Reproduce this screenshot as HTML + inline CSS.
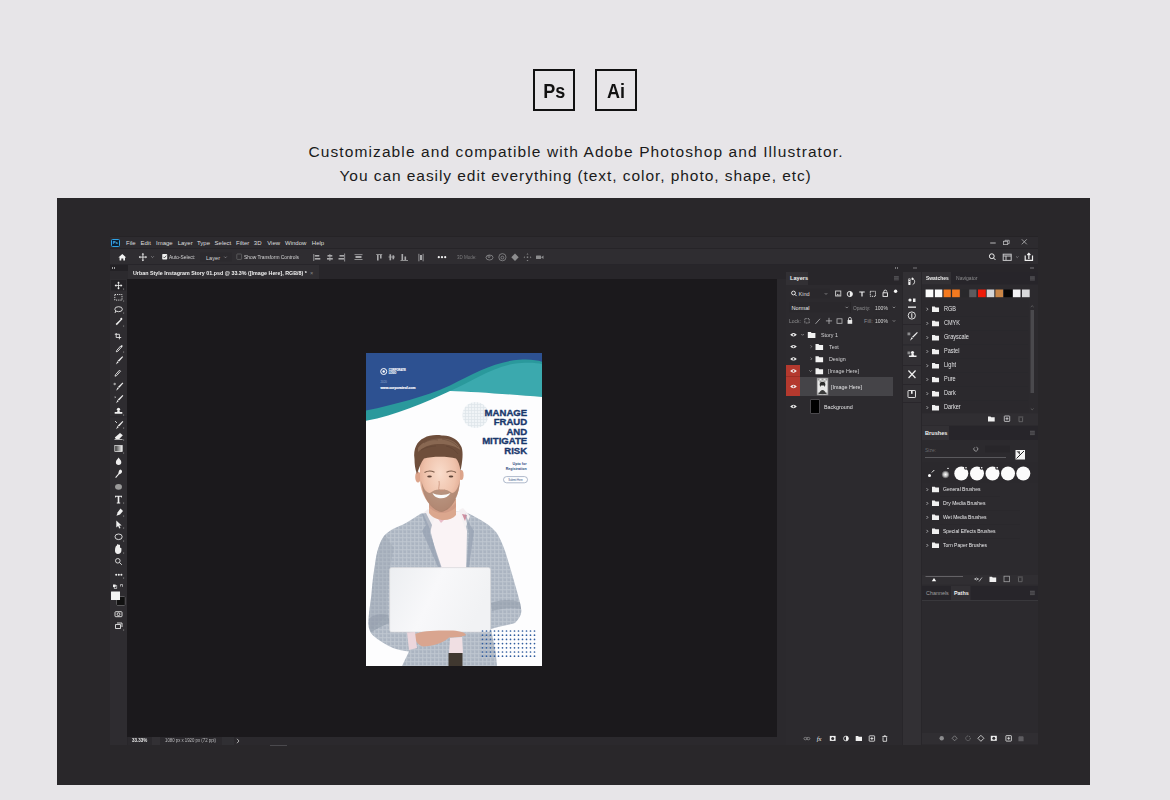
<!DOCTYPE html>
<html><head><meta charset="utf-8">
<style>
*{margin:0;padding:0;box-sizing:border-box}
html,body{width:1170px;height:800px;overflow:hidden;background:#e7e5e8;font-family:"Liberation Sans",sans-serif}
.a{position:absolute}
.box{position:absolute;border:2.6px solid #111;width:42px;height:42px;font-weight:bold;font-size:20px;color:#111;text-align:center;line-height:40px}
.cap{position:absolute;white-space:nowrap;font-size:15.5px;color:#1a1a1a}
.t{position:absolute;white-space:nowrap;font-size:6px;line-height:8px;color:#dedede}
.ic{position:absolute;overflow:visible}
.t{transform-origin:0 50%}
</style></head><body>
<div class="box" style="left:533px;top:69px"><span style="display:inline-block;transform:scaleX(0.9)">Ps</span></div>
<div class="box" style="left:595px;top:69px"><span style="display:inline-block;transform:scaleX(0.9)">Ai</span></div>
<div class="cap" style="left:308.5px;top:143px;letter-spacing:1.1px">Customizable and compatible with Adobe Photoshop and Illustrator.</div>
<div class="cap" style="left:339.5px;top:167px;letter-spacing:0.94px">You can easily edit everything (text, color, photo, shape, etc)</div>

<!-- dark frame -->
<div class="a" style="left:57px;top:198px;width:1033px;height:587px;background:#29272a"></div>

<!-- PS window base -->
<div class="a" id="menubar" style="left:110px;top:236px;width:928px;height:12px;background:#2d2b2f;border-top:1px solid #252326"></div>
<div class="a" id="optbar" style="left:110px;top:248px;width:928px;height:17px;background:#2f2d31;border-top:1px solid #262428;border-bottom:1px solid #27252a"></div>
<div class="a" style="left:110px;top:265px;width:928px;height:480px;background:#28262a"></div>

<!-- menu -->
<div class="a" style="left:111px;top:239px;width:9px;height:8px;border:1.3px solid #2fa3e6;border-radius:1.5px;background:#0b1f33"></div>
<div class="t" style="left:113px;top:239px;font-size:4px;color:#5cc1ff;font-weight:bold;line-height:8px">Ps</div>
<div class="t" style="left:126px;top:238.5px">File</div>
<div class="t" style="left:140.5px;top:238.5px">Edit</div>
<div class="t" style="left:156px;top:238.5px">Image</div>
<div class="t" style="left:177.7px;top:238.5px">Layer</div>
<div class="t" style="left:197px;top:238.5px">Type</div>
<div class="t" style="left:214.6px;top:238.5px">Select</div>
<div class="t" style="left:236px;top:238.5px">Filter</div>
<div class="t" style="left:253.8px;top:238.5px">3D</div>
<div class="t" style="left:267.2px;top:238.5px">View</div>
<div class="t" style="left:285px;top:238.5px">Window</div>
<div class="t" style="left:311.8px;top:238.5px">Help</div>

<!-- options bar -->
<svg class="ic" style="left:110px;top:248px" width="460" height="17" viewBox="110 248 460 17">
 <g fill="#f2f2f2">
  <path d="M118.4 257.6 L122.3 254 L126.2 257.6 L125 257.6 L125 260.6 L123.3 260.6 L123.3 258.6 L121.3 258.6 L121.3 260.6 L119.6 260.6 L119.6 257.6Z"/>
 </g>
 <g stroke="#e6e6e6" stroke-width="0.9" fill="none">
  <path d="M142.9 253.6 V260.6 M139.4 257.1 H146.4"/>
 </g>
 <g fill="#e6e6e6"><path d="M142.9 253 l-1.3 1.5 h2.6z M142.9 261.2 l-1.3 -1.5 h2.6z M138.8 257.1 l1.5 -1.3 v2.6z M147 257.1 l-1.5 -1.3 v2.6z"/></g>
 <path d="M151.2 256.3 l1.3 1.3 l1.3 -1.3" stroke="#9a9a9c" stroke-width="0.7" fill="none"/>
 <rect x="162.2" y="253.9" width="5" height="5.6" rx="0.8" fill="#f0f0f0"/>
 <path d="M163.3 256.8 l1.1 1.1 l1.9 -2.2" stroke="#333" stroke-width="0.8" fill="none"/>
 <rect x="200" y="252.5" width="32" height="9" fill="#2c2a2e"/>
 <path d="M224.3 256.6 l1.2 1.2 l1.2 -1.2" stroke="#9a9a9c" stroke-width="0.7" fill="none"/>
 <rect x="236.8" y="254" width="4.8" height="5.4" rx="0.6" fill="none" stroke="#6b6b6d" stroke-width="0.7"/>
 <g fill="#a9a9ab">
  <rect x="313.4" y="254" width="0.8" height="7"/><rect x="314.8" y="255" width="4.5" height="1.6"/><rect x="314.8" y="258" width="5.5" height="1.6"/>
  <rect x="329.5" y="254" width="0.8" height="7"/><rect x="327.5" y="255" width="4.8" height="1.6"/><rect x="327" y="258" width="5.8" height="1.6"/>
  <rect x="344.3" y="253.5" width="0.8" height="8"/><rect x="339.5" y="255" width="4.5" height="1.6"/><rect x="338.5" y="258" width="5.5" height="1.6"/>
  <rect x="354.5" y="254.3" width="8" height="0.8"/><rect x="355.5" y="256" width="6" height="2"/><rect x="354.5" y="259.2" width="8" height="0.8"/>
  <rect x="376.2" y="254" width="6" height="0.8"/><rect x="377" y="255" width="1.6" height="5.5"/><rect x="380" y="255" width="1.6" height="3.5"/>
  <rect x="388.5" y="256.6" width="6.5" height="0.8"/><rect x="389.5" y="254.3" width="1.6" height="6"/><rect x="392.5" y="255.3" width="1.6" height="4"/>
  <rect x="400.5" y="260" width="7.5" height="0.8"/><rect x="401.5" y="254" width="1.6" height="6"/><rect x="404.5" y="256.5" width="1.6" height="3.5"/>
  <rect x="418.5" y="253.8" width="0.8" height="7.5"/><rect x="422.7" y="253.8" width="0.8" height="7.5"/><rect x="420" y="255" width="2" height="5"/>
 </g>
 <g fill="#f4f4f4"><circle cx="438.8" cy="257.2" r="1.1"/><circle cx="442" cy="257.2" r="1.1"/><circle cx="445.2" cy="257.2" r="1.1"/></g>
 <g fill="none" stroke="#8c8c8e" stroke-width="0.8">
  <ellipse cx="489.5" cy="257.5" rx="3.5" ry="2.5"/><circle cx="489" cy="256.5" r="1"/>
  <circle cx="502.4" cy="257.2" r="3.6"/><circle cx="502.4" cy="257.6" r="1.4"/>
 </g>
 <g fill="#8c8c8e">
  <path d="M515 253.5 l3.7 3.7 l-3.7 3.7 l-3.7 -3.7z"/>
  <path d="M527.5 253.3 l1 1.2 h-2z M527.5 261.2 l1 -1.2 h-2z M523.6 257.2 l1.2 -1 v2z M531.4 257.2 l-1.2 -1 v2z"/><rect x="526.8" y="256.5" width="1.4" height="1.4"/>
  <rect x="536" y="255.5" width="5" height="3.5" rx="0.5"/><path d="M541 257.2 l2.5 -1.8 v3.6z"/>
 </g>
</svg>
<div class="t" style="left:169px;top:253px;font-size:5.8px;color:#d4d4d5;transform:scaleX(0.83)">Auto-Select:</div>
<div class="t" style="left:206px;top:253.5px;font-size:5.6px;color:#d4d4d5">Layer</div>
<div class="t" style="left:243.5px;top:253px;font-size:5.8px;color:#d4d4d5;transform:scaleX(0.84)">Show Transform Controls</div>
<div class="t" style="left:457px;top:253px;font-size:5.8px;color:#7a7a7c;transform:scaleX(0.78)">3D Mode:</div>

<!-- top right -->
<svg class="ic" style="left:980px;top:236px" width="58" height="28" viewBox="980 236 58 28">
 <rect x="990.2" y="242.5" width="5.5" height="1" fill="#b8b8ba"/>
 <g fill="none" stroke="#b8b8ba" stroke-width="0.8">
  <rect x="1003.5" y="241.3" width="4.2" height="3.3"/><path d="M1005 241.3 v-1 h4.2 v3.3 h-1.5"/>
  <path d="M1021.8 239.3 l5 5 M1026.8 239.3 l-5 5"/>
 </g>
 <g fill="none" stroke="#f0f0f0" stroke-width="1">
  <circle cx="991.8" cy="256.2" r="2.4"/><path d="M993.5 258 l2 2"/>
  <rect x="1003.2" y="254.2" width="8" height="6.2" stroke="#c8c8ca"/><path d="M1003.2 256 h8 M1006 256 v4.4" stroke="#c8c8ca"/>
  <path d="M1016.2 256.5 l1.1 1.1 l1.1 -1.1" stroke="#9a9a9c" stroke-width="0.7"/>
  <path d="M1025.2 255.5 v4.8 h7.3 v-4.8 M1028.85 259 v-5.5 M1027.3 255 l1.55 -1.6 l1.55 1.6" stroke-width="1.2"/>
 </g>
</svg>
<!-- tab row -->
<div class="a" style="left:128px;top:265px;width:191px;height:14px;background:#302e32"></div>
<div class="t" style="left:133.4px;top:268.5px;font-size:5.6px;font-weight:bold;color:#f0f0f0;transform:scaleX(0.955)">Urban Style Instagram Story 01.psd @ 33.3% ([Image Here], RGB/8) *</div>
<div class="t" style="left:310px;top:268.5px;font-size:5.6px;color:#8a8a8c">&#215;</div>
<div class="a" style="left:110px;top:265px;width:18px;height:5.5px;background:#232125"></div>
<div class="a" style="left:110px;top:270.5px;width:18px;height:8.5px;background:#2c2a2e"></div>
<div class="a" style="left:112px;top:267px;width:1.2px;height:2px;background:#a0a0a2"></div>
<div class="a" style="left:114px;top:267px;width:1.2px;height:2px;background:#a0a0a2"></div>
<!-- toolbar -->
<div class="a" style="left:110px;top:279px;width:17px;height:466px;background:#2e2c30"></div>
<!-- canvas -->
<div class="a" style="left:127px;top:279px;width:650px;height:458px;background:#1b191c"></div>

<!-- toolbar icons -->
<svg class="ic" style="left:106px;top:276px" width="25" height="360" viewBox="106 276 25 360">
 <rect x="111" y="280" width="15" height="10.5" fill="#242226"/>
 <rect x="110" y="416.5" width="17" height="0.6" fill="#27252a"/>
 <g fill="#f0f0f0" stroke="none">
  <!-- move -->
  <rect x="118.1" y="282.3" width="0.8" height="6.4"/><rect x="115.3" y="285.1" width="6.4" height="0.8"/>
  <path d="M118.5 281.6 l1.4 1.7 h-2.8z M118.5 289.4 l1.4 -1.7 h-2.8z M114.6 285.5 l1.7 -1.4 v2.8z M122.4 285.5 l-1.7 -1.4 v2.8z"/>
 </g>
 <g fill="none" stroke="#e8e8e8" stroke-width="0.9">
  <rect x="114.8" y="294.5" width="7.2" height="5.6" stroke-dasharray="1.2 1"/>
  <ellipse cx="118.6" cy="309.2" rx="3.8" ry="2.5"/>
  <path d="M115.8 311 l-0.8 2"/>
  <path d="M116.2 333 v4.5 h5 M114.8 334.3 h4.6 v5"/>
  
  <path d="M120.8 345.8 l-4 4.5 l-0.5 1.5 l1.5 -0.5 l4 -4.5"/>
  <path d="M119.5 370.2 l-4 4.5 l-0.5 1.5 l1.5 -0.5 l4 -4.5z"/>
  <ellipse cx="118.6" cy="536.8" rx="3.6" ry="2.8"/>
  <circle cx="117.8" cy="560.8" r="2.3"/><path d="M119.5 562.5 l2.3 2.3"/>
  <rect x="115" y="611.7" width="7" height="5" rx="0.8"/><circle cx="118.5" cy="614.2" r="1.4"/>
  <path d="M115.5 624.5 h5 v4 h-5z M117 623 h5 v4"/>
  <rect x="116.8" y="597" width="8" height="8" rx="0.6" stroke="#9a9a9a" stroke-width="0.8"/>
 </g>
 <g fill="#f0f0f0">
  <path d="M121.5 318.5 l0.8 0.8 l-5.5 6 l-1.2 -1.2z"/><circle cx="121.3" cy="318.8" r="1"/>
  <path d="M121.8 345 l1 1 l-1.5 1.5 l-1 -1z"/>
  <path d="M122.3 356.3 l0.8 0.8 l-4 4.5 l-1.6 -0.6z"/><path d="M117.3 361.3 l1.4 0.9 l-2.8 2.4z"/>
  <path d="M122.5 382.5 l0.8 0.8 l-4 4.5 l-1.6 -0.6z"/><path d="M117.5 387.5 l1.4 0.9 l-2.8 2.4z"/><circle cx="114.7" cy="384" r="1.2" fill="#a0a0a0"/>
  <path d="M122.5 395 l0.8 0.8 l-4 4.5 l-1.6 -0.6z"/><path d="M117.5 400 l1.4 0.9 l-2.8 2.4z"/><path d="M114.8 396 l1 1.3 l-1 1z"/>
  <circle cx="118.5" cy="409.3" r="1.6"/><path d="M117.6 410.5 h1.8 l0.5 1.6 h2.4 v1.6 h-7.6 v-1.6 h2.4z"/>
  <path d="M122.5 421 l0.8 0.8 l-4 4.5 l-1.6 -0.6z"/><path d="M117.5 426 l1.4 0.9 l-2.8 2.4z"/><path d="M115 421 l2 2" stroke="#f0f0f0" stroke-width="0.8"/>
  <path d="M120 433 l2.8 2.2 l-3.5 3.8 h-3.5 l-1 -1.5z"/><rect x="114.5" y="439.2" width="8" height="0.7"/>
  <path d="M118.6 457.6 c1.5 2 2.7 3.3 2.7 4.6 a2.7 2.7 0 0 1 -5.4 0 c0 -1.3 1.2 -2.6 2.7 -4.6z"/>
  <path d="M120.5 469.5 c2 0.8 2 3 0.5 4 l-2 1 l-3 3.5 l-0.8 -0.8 l3 -3.5 l0.5 -2 c0.5 -1.5 1 -2.2 1.8 -2.2z"/>
  <ellipse cx="118.5" cy="486.8" rx="3.5" ry="2.9" fill="#9a9a9a"/>
  <path d="M115 495.8 h7 v1.6 h-0.8 v-0.6 h-1.9 v5.6 h0.9 v1 h-3.4 v-1 h0.9 v-5.6 h-1.9 v0.6 h-0.8z"/>
  <path d="M120.5 508.5 l2.5 2.5 l-3 3.6 l-3.5 1.2 l1.2 -3.5z"/>
  <path d="M116.3 520.5 v7 l1.8 -1.5 l1.2 2.5 l1.2 -0.6 l-1.2 -2.4 h2.4z"/>
  <path d="M115 550 c0 -2.5 1 -4.5 2 -4.5 v3 v-4 c0.6 -0.5 1.2 -0.5 1.5 0 v3.5 v-3 c0.5 -0.5 1.2 -0.5 1.5 0 v3 c0.5 -0.5 1.4 -0.3 1.4 0.5 v2 c0 2 -1.5 3.5 -3.5 3.5 c-1.8 0 -2.9 -1.5 -2.9 -3z"/>
  <circle cx="116.2" cy="574.8" r="1"/><circle cx="118.8" cy="574.8" r="1"/><circle cx="121.4" cy="574.8" r="1"/>
  <rect x="111.1" y="591.7" width="8.9" height="8.3" />
  <rect x="113" y="584.5" width="2.6" height="2.6"/><rect x="114.2" y="585.7" width="2.6" height="2.6" fill="none" stroke="#f0f0f0" stroke-width="0.6"/>
  <path d="M120.5 584.5 h2 v2 M122.5 586.5 l-0.6 -0.6 M120.5 584.5 v2" stroke="#f0f0f0" stroke-width="0.6" fill="none"/>
 </g>
 <rect x="116.8" y="597" width="8" height="8" fill="#111"/>
 <rect x="111.1" y="591.7" width="8.9" height="8.3" fill="#f4f4f4"/>
 <g fill="#aaa">
  <rect x="123.2" y="288.6" width="0.9" height="0.9"/><rect x="123.2" y="300.6" width="0.9" height="0.9"/><rect x="123.2" y="312.6" width="0.9" height="0.9"/>
  <rect x="123.2" y="325.6" width="0.9" height="0.9"/><rect x="123.2" y="351.6" width="0.9" height="0.9"/><rect x="123.2" y="414.6" width="0.9" height="0.9"/>
  <rect x="123.2" y="427.6" width="0.9" height="0.9"/><rect x="123.2" y="439.6" width="0.9" height="0.9"/><rect x="123.2" y="452.6" width="0.9" height="0.9"/>
  <rect x="123.2" y="502.6" width="0.9" height="0.9"/><rect x="123.2" y="515.6" width="0.9" height="0.9"/><rect x="123.2" y="527.6" width="0.9" height="0.9"/>
  <rect x="123.2" y="540.6" width="0.9" height="0.9"/><rect x="123.2" y="552.6" width="0.9" height="0.9"/><rect x="123.2" y="577.6" width="0.9" height="0.9"/>
  <rect x="123.2" y="629.6" width="0.9" height="0.9"/>
 </g>
 <linearGradient id="gr1" x1="0" x2="1"><stop offset="0" stop-color="#333"/><stop offset="1" stop-color="#eee"/></linearGradient>
 <rect x="114.8" y="445.6" width="7.4" height="6" fill="url(#gr1)" stroke="#eee" stroke-width="0.7"/>
</svg>
<!-- status bar -->
<div class="a" style="left:128px;top:737px;width:649px;height:8px;background:#2b292d"></div>
<div class="a" style="left:152px;top:737px;width:8px;height:7.5px;background:#323034"></div>
<div class="a" style="left:222px;top:737px;width:12px;height:7.5px;background:#302f33"></div>
<div class="t" style="left:131.5px;top:737px;font-size:5px;line-height:7.5px;font-weight:bold;color:#e8e8e8;transform:scaleX(0.9)">33.33%</div>
<div class="t" style="left:165px;top:737px;font-size:5px;line-height:7.5px;color:#bdbdbf;transform:scaleX(0.86)">1080 px x 1920 px (72 ppi)</div>
<svg class="ic" style="left:236px;top:738px" width="4" height="6" viewBox="0 0 4 6"><path d="M1 0.8 l2 2.2 l-2 2.2" stroke="#d0d0d0" stroke-width="0.8" fill="none"/></svg>
<div class="a" style="left:270px;top:745px;width:17px;height:1px;background:#4a494d"></div>
<!-- gutter -->
<div class="a" style="left:784px;top:279px;width:2px;height:466px;background:#28262a"></div>
<div class="a" style="left:777px;top:279px;width:9px;height:466px;background:#2b292d"></div>

<!-- layers panel -->
<div class="a" style="left:786px;top:272px;width:116px;height:473px;background:#2c2a2e"></div>
<div class="a" style="left:808px;top:272px;width:94px;height:13px;background:#28262a"></div>

<!-- layers panel content -->
<div class="a" style="left:786px;top:272px;width:22px;height:13px;background:#323034"></div>
<div class="t" style="left:790px;top:274px;font-size:5.6px;font-weight:bold;color:#f0f0f0">Layers</div>
<svg class="ic" style="left:786px;top:272px" width="116" height="473" viewBox="786 272 116 473">
 <g><rect x="894" y="276" width="4.8" height="4.4" fill="#4e4d51"/><rect x="894" y="277.5" width="4.8" height="0.5" fill="#3a393d"/><rect x="894" y="278.9" width="4.8" height="0.5" fill="#3a393d"/></g>
 <rect x="797" y="288.5" width="33" height="10" fill="#2a282c"/>
 <rect x="789" y="302" width="62" height="10.5" fill="#2a282c"/>
 <rect x="873" y="302.5" width="16" height="9.5" fill="#2b292d"/>
 <rect x="873" y="316" width="16" height="9.5" fill="#2b292d"/>
 <rect x="850.3" y="302" width="0.6" height="11" fill="#242226"/>
 <g fill="none" stroke="#f0f0f0" stroke-width="0.9">
  <circle cx="793.5" cy="293" r="1.9"/><path d="M794.8 294.3 l1.8 1.8"/>
  <rect x="835.6" y="291" width="5.2" height="5" stroke="#cfcfcf"/>
  <circle cx="849.8" cy="294" r="2.6"/>
  <rect x="870.3" y="291.3" width="5.2" height="5" stroke-dasharray="1.3 0.8"/>
  <rect x="883" y="292.8" width="4.5" height="3.6" />
  <path d="M883.8 292.8 v-1.2 a1.5 1.5 0 0 1 3 0" />
 </g>
 <path d="M849.8 291.4 a2.6 2.6 0 0 1 0 5.2z" fill="#f0f0f0"/>
 <path d="M836.2 295.6 l1.5 -1.8 l1.2 1.2 l1 -0.8 v1.4z" fill="#cfcfcf"/>
 <path d="M859.3 291.4 h5.4 v1.2 h-2.1 v4 h-1.2 v-4 h-2.1z" fill="#f0f0f0"/>
 <circle cx="895.6" cy="291.2" r="1.7" fill="#f4f4f4"/>
 <g fill="none" stroke="#a6a6a8" stroke-width="0.7">
  <path d="M824.8 293.2 l1.2 1.2 l1.2 -1.2"/>
  <path d="M845.6 306.8 l1.2 1.2 l1.2 -1.2"/>
  <path d="M892.8 306.8 l1.2 1.2 l1.2 -1.2"/>
  <path d="M892.8 320.3 l1.2 1.2 l1.2 -1.2"/>
 </g>
 <g fill="none" stroke="#b8b8ba" stroke-width="0.8">
  <rect x="804.8" y="318.6" width="4.4" height="4.4" stroke-dasharray="0.9 0.7"/>
  <path d="M815.5 323.8 l4.5 -5"/>
  <path d="M829 317.8 v6.2 M825.9 320.9 h6.2"/>
  <rect x="837" y="318.8" width="5" height="4.5"/>
 </g>
 <rect x="847.6" y="320" width="4.6" height="3.8" fill="#e8e8e8"/>
 <path d="M848.5 320 v-1.2 a1.4 1.4 0 0 1 2.8 0 v1.2" fill="none" stroke="#e8e8e8" stroke-width="0.8"/>
 <!-- layer rows -->
 <rect x="786" y="365" width="14" height="31" fill="#b4392e"/>
 <rect x="786" y="376" width="14" height="0.6" fill="#8d2a22"/>
 <rect x="800" y="377" width="93" height="19" fill="#454448"/>
 <g fill="#f2f2f2">
  <path d="M790.2 334.8 q3.3 -3.4 6.6 0 q-3.3 3.4 -6.6 0z"/>
  <path d="M790.2 346.6 q3.3 -3.4 6.6 0 q-3.3 3.4 -6.6 0z"/>
  <path d="M790.2 358.9 q3.3 -3.4 6.6 0 q-3.3 3.4 -6.6 0z"/>
  <path d="M790.2 371 q3.3 -3.4 6.6 0 q-3.3 3.4 -6.6 0z"/>
  <path d="M790.2 386.5 q3.3 -3.4 6.6 0 q-3.3 3.4 -6.6 0z"/>
  <path d="M790.2 406.5 q3.3 -3.4 6.6 0 q-3.3 3.4 -6.6 0z"/>
  <path d="M807.8 332 h3 l0.8 0.9 h3.8 v5 h-7.6z"/>
  <path d="M815.5 344 h3 l0.8 0.9 h3.8 v5 h-7.6z"/>
  <path d="M815.5 356.3 h3 l0.8 0.9 h3.8 v5 h-7.6z"/>
  <path d="M815.5 368.3 h3 l0.8 0.9 h3.8 v5 h-7.6z"/>
 </g>
 <g fill="#2c2a2e"><circle cx="793.5" cy="334.8" r="0.9"/><circle cx="793.5" cy="346.6" r="0.9"/><circle cx="793.5" cy="358.9" r="0.9"/><circle cx="793.5" cy="406.5" r="0.9"/></g>
 <g fill="#b4392e"><circle cx="793.5" cy="371" r="0.9"/><circle cx="793.5" cy="386.5" r="0.9"/></g>
 <g fill="none" stroke="#a6a6a8" stroke-width="0.7">
  <path d="M801.3 334 l1.3 1.3 l1.3 -1.3"/>
  <path d="M810.6 345.3 l1.2 1.2 l-1.2 1.2"/>
  <path d="M810.6 357.6 l1.2 1.2 l-1.2 1.2"/>
  <path d="M809.3 370.3 l1.3 1.3 l1.3 -1.3"/>
 </g>
 <rect x="816.8" y="377.8" width="11.5" height="17.5" fill="#8a898c"/>
 <rect x="817.5" y="378.5" width="10" height="16" fill="#e8e8e8"/>
 <g fill="#9a9a9a"><rect x="817.5" y="378.5" width="2" height="2"/><rect x="821.5" y="378.5" width="2" height="2"/><rect x="825.5" y="378.5" width="2" height="2"/><rect x="819.5" y="380.5" width="2" height="2"/><rect x="823.5" y="380.5" width="2" height="2"/>
 <rect x="817.5" y="392.5" width="2" height="2"/><rect x="821.5" y="392.5" width="2" height="2"/><rect x="825.5" y="392.5" width="2" height="2"/></g>
 <circle cx="822.5" cy="384.5" r="2.8" fill="#2a2a2a"/>
 <path d="M818.5 394 q4 -8 8 0z" fill="#3a3a3a"/>
 <rect x="820.8" y="385.5" width="3.4" height="2.2" fill="#eee"/>
 <rect x="810.5" y="399.5" width="9" height="14" fill="#6a696c"/>
 <rect x="811" y="400" width="8" height="13" fill="#000"/>
 <!-- bottom icons -->
 <g fill="none" stroke="#8b8b8d" stroke-width="0.8"><ellipse cx="805.5" cy="738.6" rx="1.6" ry="1.2"/><ellipse cx="808.3" cy="738.6" rx="1.6" ry="1.2"/></g>
 <g fill="#f0f0f0">
  <rect x="829.8" y="735.9" width="5.8" height="5" />
  <path d="M855.7 736 h2.4 l0.7 0.8 h3.2 v4.2 h-6.3z"/>
 </g>
 <circle cx="832.7" cy="738.4" r="1.5" fill="#2c2a2e"/>
 <g fill="none" stroke="#f0f0f0" stroke-width="0.8">
  <circle cx="846" cy="738.5" r="2.4"/>
  <rect x="869.2" y="735.8" width="5.4" height="5.4" rx="0.5"/>
  <path d="M871.9 737 v3 M870.4 738.5 h3"/>
  <path d="M882.3 736.6 h5 M883 737.3 v4 h3.6 v-4 M884 736.6 v-0.8 h1.6 v0.8"/>
 </g>
 <path d="M846 736.1 a2.4 2.4 0 0 1 0 4.8z" fill="#f0f0f0"/>
</svg>
<div class="t" style="left:798.5px;top:290px;font-size:5.6px;color:#d8d8d8">Kind</div>
<div class="t" style="left:791.5px;top:303.5px;font-size:5.6px;color:#e8e8e8">Normal</div>
<div class="t" style="left:853px;top:303.5px;font-size:5.6px;color:#8d8d8f;transform:scaleX(0.85)">Opacity:</div>
<div class="t" style="left:875px;top:303.5px;font-size:5.6px;color:#d8d8d8;transform:scaleX(0.9)">100%</div>
<div class="t" style="left:789px;top:317px;font-size:5.6px;color:#8d8d8f;transform:scaleX(0.9)">Lock:</div>
<div class="t" style="left:864px;top:317px;font-size:5.6px;color:#8d8d8f">Fill:</div>
<div class="t" style="left:875px;top:317px;font-size:5.6px;color:#d8d8d8;transform:scaleX(0.9)">100%</div>
<div class="t" style="left:820.5px;top:331px;font-size:6.1px;color:#d4d4d6;transform:scaleX(0.88)">Story 1</div>
<div class="t" style="left:828.5px;top:342.6px;font-size:6.1px;color:#d4d4d6;transform:scaleX(0.88)">Text</div>
<div class="t" style="left:828.5px;top:355px;font-size:6.1px;color:#d4d4d6;transform:scaleX(0.88)">Design</div>
<div class="t" style="left:828px;top:367px;font-size:6.1px;color:#d4d4d6;transform:scaleX(0.88)">[Image Here]</div>
<div class="t" style="left:831px;top:382.5px;font-size:6.1px;color:#e4e4e6;transform:scaleX(0.88)">[Image Here]</div>
<div class="t" style="left:823.5px;top:402.5px;font-size:6.1px;color:#e4e4e6;transform:scaleX(0.88)">Background</div>
<div class="t" style="left:816.8px;top:735px;font-size:6.5px;font-style:italic;font-family:'Liberation Serif',serif;color:#f0f0f0">fx</div>
<!-- icon column -->
<div class="a" style="left:903px;top:272px;width:18px;height:473px;background:#323034"></div>

<!-- icon column content -->
<svg class="ic" style="left:890px;top:262px" width="150" height="483" viewBox="890 262 150 483">
 <g fill="#9c9c9e"><rect x="895" y="267.3" width="1" height="1.4"/><rect x="897" y="267.3" width="1" height="1.4"/>
 <rect x="913.5" y="267.3" width="1" height="1.4"/><rect x="915.5" y="267.3" width="1" height="1.4"/>
 <rect x="1030.5" y="267.3" width="1" height="1.4"/><rect x="1032.5" y="267.3" width="1" height="1.4"/></g>
 <g fill="#27252a"><rect x="903" y="324" width="18" height="0.8"/><rect x="903" y="344.5" width="18" height="0.8"/><rect x="903" y="365" width="18" height="0.8"/><rect x="903" y="384" width="18" height="0.8"/><rect x="903" y="402" width="18" height="0.8"/></g>
 <g fill="#f0f0f0">
  <rect x="908.3" y="278.5" width="2.2" height="6.5" rx="0.4"/><rect x="908.7" y="279.2" width="1.4" height="0.6" fill="#323034"/><rect x="908.7" y="281" width="1.4" height="0.6" fill="#323034"/>
  <rect x="908" y="306.5" width="8" height="1.3"/>
  <circle cx="910" cy="300" r="1.6"/><rect x="913" y="298.5" width="2.5" height="3.5"/>
  <path d="M917 332 l0.8 0.8 l-4.5 4.8 l-1.4 -0.6z"/><path d="M911.5 337.3 l1.5 1 l-3 2.5z"/>
  <circle cx="912.5" cy="352.5" r="1.6"/><path d="M911.5 354 h2 l0.6 1.5 h2.4 v1.6 h-7.6 v-1.6 h2.4z"/>
  <path d="M908 371 l7 7.5 l0.9 -0.9 l-7 -7.5z"/><path d="M916 371 l-7 7.5 l-0.9 -0.9 l7 -7.5z"/>
 </g>
 <g fill="#8c8c8e"><rect x="907.5" y="332.5" width="2.8" height="2.8"/><rect x="907.5" y="351.5" width="2.8" height="2.8"/></g>
 <g fill="none" stroke="#f0f0f0" stroke-width="0.9">
  <path d="M912.5 278.8 c2.6 0.3 3 4.5 0.2 5.8"/><path d="M912 277.8 l1.3 1 l-1.3 0.9z" fill="#f0f0f0"/>
  <circle cx="911.8" cy="315.5" r="3.6"/>
  <rect x="908" y="390.5" width="7.5" height="7" rx="0.6"/>
 </g>
 <rect x="911.3" y="313.3" width="1" height="4.6" fill="#f0f0f0"/>
 <rect x="911" y="390.8" width="1.6" height="3" fill="#f0f0f0"/>
</svg>
<!-- swatches panel -->
<div class="a" style="left:922px;top:272px;width:116px;height:473px;background:#2c2a2e"></div>
<svg class="ic" style="left:920px;top:270px" width="120" height="476" viewBox="920 270 120 476">
 <!-- swatches header -->
 <rect x="922" y="272" width="116" height="12.5" fill="#27252a"/>
 <rect x="922" y="272" width="29" height="12.5" fill="#323034"/>
 <g><rect x="1030.0" y="276.2" width="4.8" height="4.4" fill="#4e4d51"/><rect x="1030.0" y="277.7" width="4.8" height="0.5" fill="#3a393d"/><rect x="1030.0" y="279.1" width="4.8" height="0.5" fill="#3a393d"/></g>
 <rect x="922" y="285" width="116" height="15" fill="#2c2a2e"/>
 <rect x="925.6" y="289.5" width="7.7" height="7.7" fill="#fbfbfb"/>
 <rect x="934.9" y="289.5" width="7.4" height="7.7" fill="#fbfbfb"/>
 <rect x="943.6" y="289.5" width="7.2" height="7.7" fill="#f47a20"/>
 <rect x="952.1" y="289.5" width="7.7" height="7.7" fill="#f47a20"/>
 <rect x="961" y="289.5" width="7.5" height="7.7" fill="#29282b"/>
 <rect x="969.2" y="289.5" width="7.2" height="7.7" fill="#5c5b5e"/>
 <rect x="978" y="289.5" width="7.8" height="7.7" fill="#ee1c0a"/>
 <rect x="986.7" y="289.5" width="7.6" height="7.7" fill="#d6d6d8"/>
 <rect x="995.4" y="289.5" width="7.6" height="7.7" fill="#c98546"/>
 <rect x="1004" y="289.5" width="8" height="7.7" fill="#050505"/>
 <rect x="1013" y="289.5" width="7.5" height="7.7" fill="#f2f2f4"/>
 <rect x="1022" y="289.5" width="7.7" height="7.7" fill="#d9d9db"/>
 <!-- list -->
 <rect x="922" y="300" width="107" height="113" fill="#2b292d"/>
 <g fill="#29282c">
  <rect x="940" y="316" width="88" height="0.5"/><rect x="940" y="330" width="88" height="0.5"/><rect x="940" y="344" width="88" height="0.5"/>
  <rect x="940" y="358" width="88" height="0.5"/><rect x="940" y="372" width="88" height="0.5"/><rect x="940" y="386" width="88" height="0.5"/><rect x="940" y="400" width="88" height="0.5"/>
 </g>
 <rect x="1030.5" y="310" width="3.5" height="83" fill="#4a494d"/>
 <g fill="none" stroke="#777" stroke-width="0.6"><path d="M1030.8 307 l1.4 -1.3 l1.4 1.3"/><path d="M1030.8 408.5 l1.4 1.3 l1.4 -1.3"/></g>
 <g fill="none" stroke="#c4c4c6" stroke-width="0.8">
  <path d="M926.6 307.8 l1.3 1.4 l-1.3 1.4"/><path d="M926.6 322 l1.3 1.4 l-1.3 1.4"/><path d="M926.6 336.2 l1.3 1.4 l-1.3 1.4"/><path d="M926.6 350.1 l1.3 1.4 l-1.3 1.4"/>
  <path d="M926.6 364.3 l1.3 1.4 l-1.3 1.4"/><path d="M926.6 378.1 l1.3 1.4 l-1.3 1.4"/><path d="M926.6 392.2 l1.3 1.4 l-1.3 1.4"/><path d="M926.6 406.2 l1.3 1.4 l-1.3 1.4"/>
 </g>
 <g fill="#f0f0f0">
  <path d="M932 306.6 h2.8 l0.7 0.8 h3.5 v4.6 h-7z"/><path d="M932 320.8 h2.8 l0.7 0.8 h3.5 v4.6 h-7z"/><path d="M932 335 h2.8 l0.7 0.8 h3.5 v4.6 h-7z"/>
  <path d="M932 348.9 h2.8 l0.7 0.8 h3.5 v4.6 h-7z"/><path d="M932 363.1 h2.8 l0.7 0.8 h3.5 v4.6 h-7z"/><path d="M932 376.9 h2.8 l0.7 0.8 h3.5 v4.6 h-7z"/>
  <path d="M932 391 h2.8 l0.7 0.8 h3.5 v4.6 h-7z"/><path d="M932 405 h2.8 l0.7 0.8 h3.5 v4.6 h-7z"/>
 </g>
 <!-- swatches bottom -->
 <rect x="922" y="413.5" width="116" height="11.5" fill="#302e32"/>
 <path d="M988 416.5 h2.5 l0.7 0.8 h3.5 v4.3 h-6.7z" fill="#f0f0f0"/>
 <g fill="none" stroke="#d8d8da" stroke-width="0.8"><rect x="1004.3" y="416" width="5.4" height="5.4" rx="0.5"/><path d="M1007 417.2 v3 M1005.5 418.7 h3"/></g>
 <g fill="none" stroke="#6e6e70" stroke-width="0.8"><path d="M1018.3 417 h5 M1019 417.7 v4 h3.6 v-4"/></g>
 <!-- brushes -->
 <rect x="922" y="426" width="116" height="14" fill="#27252a"/>
 <rect x="922" y="426" width="27" height="14" fill="#323034"/>
 <g><rect x="1030.0" y="430.7" width="4.8" height="4.4" fill="#4e4d51"/><rect x="1030.0" y="432.2" width="4.8" height="0.5" fill="#3a393d"/><rect x="1030.0" y="433.6" width="4.8" height="0.5" fill="#3a393d"/></g>
 <rect x="985" y="445.5" width="25" height="7" fill="#28262a"/>
 <path d="M976.4 447.2 a2 2 0 1 1 -1.6 0.2" fill="none" stroke="#bdbdbf" stroke-width="0.7"/>
 <rect x="925" y="457" width="81" height="1" fill="#5a595d"/>
 <rect x="1015.5" y="450" width="9.5" height="9.5" fill="#f4f4f4"/>
 <path d="M1016.5 458.5 l7.5 -7.5" stroke="#222" stroke-width="1"/>
 <path d="M1016.5 451.2 l3.5 3.5 v-3.5z" fill="#555"/>
 <rect x="922" y="462" width="116" height="21" fill="#2b292d"/>
 <defs><radialGradient id="bg1"><stop offset="0" stop-color="#fff"/><stop offset="0.5" stop-color="#bbb"/><stop offset="1" stop-color="#2b292d"/></radialGradient></defs>
 <circle cx="929.5" cy="475.5" r="1.5" fill="#fff"/><path d="M931.8 472.5 l2.5 -2.5" stroke="#fff" stroke-width="0.9"/>
 <circle cx="945.5" cy="474.5" r="4.2" fill="url(#bg1)"/>
 <path d="M948 467.5 l1 1.4 h-2z" fill="#fff"/>
 <g fill="#fbfbfb"><circle cx="961.3" cy="473.5" r="7"/><circle cx="977" cy="473.5" r="7"/><circle cx="992.5" cy="473.5" r="7"/><circle cx="1008" cy="473.5" r="7"/><circle cx="1023.3" cy="473.5" r="7"/></g>
 <g fill="#2b292d"><circle cx="965.8" cy="468" r="1.8"/><circle cx="981.5" cy="468" r="1.8"/><circle cx="997" cy="468" r="1.8"/></g>
 <g fill="#fff"><circle cx="966" cy="467.8" r="0.8"/><circle cx="981.7" cy="467.8" r="0.8"/><circle cx="997.2" cy="467.8" r="0.8"/></g>
 <g fill="#28262a">
  <rect x="940" y="496.5" width="60" height="0.5"/><rect x="940" y="510.5" width="80" height="0.5"/><rect x="940" y="524.5" width="80" height="0.5"/><rect x="940" y="538.5" width="80" height="0.5"/>
 </g>
 <g fill="none" stroke="#c4c4c6" stroke-width="0.8">
  <path d="M926.6 488.2 l1.3 1.4 l-1.3 1.4"/><path d="M926.6 502 l1.3 1.4 l-1.3 1.4"/><path d="M926.6 516 l1.3 1.4 l-1.3 1.4"/><path d="M926.6 529.9 l1.3 1.4 l-1.3 1.4"/><path d="M926.6 544 l1.3 1.4 l-1.3 1.4"/>
 </g>
 <g fill="#f0f0f0">
  <path d="M932 486.8 h2.8 l0.7 0.8 h3.5 v4.6 h-7z"/><path d="M932 500.6 h2.8 l0.7 0.8 h3.5 v4.6 h-7z"/><path d="M932 514.6 h2.8 l0.7 0.8 h3.5 v4.6 h-7z"/>
  <path d="M932 528.5 h2.8 l0.7 0.8 h3.5 v4.6 h-7z"/><path d="M932 542.6 h2.8 l0.7 0.8 h3.5 v4.6 h-7z"/>
 </g>
 <rect x="922" y="575" width="116" height="9.5" fill="#302e32"/>
 <rect x="925.5" y="576" width="37.5" height="0.9" fill="#6a696d"/>
 <path d="M934 578 l2.2 3.3 h-4.4z" fill="#fff"/>
 <g fill="none" stroke="#c8c8ca" stroke-width="0.8"><path d="M974.5 579 q2 -2 4 0 q-2 2 -4 0z"/><path d="M979 581.5 l3 -4"/></g>
 <path d="M989.5 576.8 h2.5 l0.7 0.8 h3.5 v4.3 h-6.7z" fill="#f0f0f0"/>
 <g fill="none" stroke="#a0a0a2" stroke-width="0.8"><rect x="1004" y="576.2" width="5.5" height="5.5"/></g>
 <g fill="none" stroke="#6e6e70" stroke-width="0.8"><path d="M1017.8 577 h5 M1018.5 577.7 v4 h3.6 v-4"/></g>
 <!-- channels / paths -->
 <rect x="922" y="586" width="116" height="14" fill="#27252a"/>
 <rect x="951" y="586" width="19.5" height="14" fill="#323034"/>
 <g><rect x="1030.0" y="590.7" width="4.8" height="4.4" fill="#4e4d51"/><rect x="1030.0" y="592.2" width="4.8" height="0.5" fill="#3a393d"/><rect x="1030.0" y="593.6" width="4.8" height="0.5" fill="#3a393d"/></g>
 <rect x="922" y="600" width="116" height="1" fill="#39383c"/>
 <!-- paths bottom -->
 <rect x="922" y="733" width="116" height="11" fill="#302e32"/>
 <circle cx="941.7" cy="738.3" r="2.2" fill="#8c8c8e"/>
 <g fill="none" stroke="#8c8c8e" stroke-width="0.8">
  <path d="M954.6 735.8 l2.5 2.5 l-2.5 2.5 l-2.5 -2.5z"/>
  <circle cx="968" cy="738.3" r="2.3" stroke-dasharray="1 0.8"/>
  <path d="M980.9 735.3 l3 3 l-3 3 l-3 -3z" stroke="#e8e8e8"/>
  <rect x="1005.9" y="735.6" width="5.5" height="5.5" rx="0.5" stroke="#e8e8e8"/>
  <path d="M1008.7 736.8 v3 M1007.2 738.3 h3" stroke="#e8e8e8"/>
  
 </g>
 <rect x="990.8" y="735.8" width="6" height="5" fill="#f0f0f0"/>
 <circle cx="993.8" cy="738.3" r="1.5" fill="#2c2a2e"/>
 <path d="M1019 736.2 h4 l0.6 0.8 v4.3 h-5.2 v-4.3z" fill="#5e5d61"/>
</svg>
<div class="t" style="left:925.5px;top:274.3px;font-size:5.6px;font-weight:bold;color:#f0f0f0;transform:scaleX(0.88)">Swatches</div>
<div class="t" style="left:955.5px;top:274.3px;font-size:5.6px;color:#8d8d8f;transform:scaleX(0.9)">Navigator</div>
<div class="t" style="left:943.6px;top:304.9px;font-size:6.6px;color:#e2e2e4;transform:scaleX(0.84)">RGB</div>
<div class="t" style="left:943.6px;top:319.1px;font-size:6.6px;color:#e2e2e4;transform:scaleX(0.84)">CMYK</div>
<div class="t" style="left:943.6px;top:333.3px;font-size:6.6px;color:#e2e2e4;transform:scaleX(0.84)">Grayscale</div>
<div class="t" style="left:943.6px;top:347.2px;font-size:6.6px;color:#e2e2e4;transform:scaleX(0.84)">Pastel</div>
<div class="t" style="left:943.6px;top:361.4px;font-size:6.6px;color:#e2e2e4;transform:scaleX(0.84)">Light</div>
<div class="t" style="left:943.6px;top:375.2px;font-size:6.6px;color:#e2e2e4;transform:scaleX(0.84)">Pure</div>
<div class="t" style="left:943.6px;top:389.3px;font-size:6.6px;color:#e2e2e4;transform:scaleX(0.84)">Dark</div>
<div class="t" style="left:943.6px;top:403.3px;font-size:6.6px;color:#e2e2e4;transform:scaleX(0.84)">Darker</div>
<div class="t" style="left:925px;top:429px;font-size:5.6px;font-weight:bold;color:#f0f0f0">Brushes</div>
<div class="t" style="left:925px;top:445.5px;font-size:5px;color:#6a696d">Size:</div>
<div class="t" style="left:942.6px;top:485.4px;font-size:5.8px;color:#e8e8ea;transform:scaleX(0.86)">General Brushes</div>
<div class="t" style="left:942.6px;top:499.2px;font-size:5.8px;color:#e8e8ea;transform:scaleX(0.86)">Dry Media Brushes</div>
<div class="t" style="left:942.6px;top:513.2px;font-size:5.8px;color:#e8e8ea;transform:scaleX(0.86)">Wet Media Brushes</div>
<div class="t" style="left:942.6px;top:527.1px;font-size:5.8px;color:#e8e8ea;transform:scaleX(0.86)">Special Effects Brushes</div>
<div class="t" style="left:942.6px;top:541.2px;font-size:5.8px;color:#e8e8ea;transform:scaleX(0.86)">Torn Paper Brushes</div>
<div class="t" style="left:926px;top:589px;font-size:5.4px;color:#a0a0a2">Channels</div>
<div class="t" style="left:954px;top:589px;font-size:5.4px;font-weight:bold;color:#f0f0f0">Paths</div>

<!-- poster -->
<svg class="a" style="left:366px;top:353px" width="176" height="313" viewBox="0 0 176 313">
 <defs>
  <pattern id="plaid" width="4" height="4" patternUnits="userSpaceOnUse">
   <rect width="4" height="4" fill="#b1bac6"/>
   <rect x="0" y="0" width="4" height="0.6" fill="#c2c9d3"/>
   <rect x="0" y="0" width="0.6" height="4" fill="#c2c9d3"/>
   <rect x="2" y="2" width="2" height="2" fill="#abb4c1"/>
  </pattern>
  <pattern id="grid" width="3" height="3" patternUnits="userSpaceOnUse">
   <rect width="3" height="3" fill="#eef3f6"/>
   <rect width="3" height="0.7" fill="#d6e0e6"/><rect width="0.7" height="3" fill="#d6e0e6"/>
  </pattern>
  <radialGradient id="face" cx="0.5" cy="0.4" r="0.65"><stop offset="0" stop-color="#f9dccb"/><stop offset="0.6" stop-color="#efc2ab"/><stop offset="1" stop-color="#d9a088"/></radialGradient>
  <linearGradient id="lap" x1="0" y1="0" x2="1" y2="0.3"><stop offset="0" stop-color="#eceef1"/><stop offset="0.5" stop-color="#f8f8fa"/><stop offset="1" stop-color="#f1f2f4"/></linearGradient>
  <clipPath id="suitclip"><path d="M55 160.5 C48 165 42 169 36.6 171.7 C28 175 22 178 18 183 C13 190 10.5 200 9.5 208 C7.5 220 6 232 5.4 242 C4 252 2.5 262 2.25 270 C2.5 276 4.5 280 7 282.6 C13 288 20 292 27 295 C32 297 38 298 43 298.5 L36 313 L131 313 L129.8 300 L125 276 C132 274 142 272 149 270 C153 266 155.5 262 155.4 257.6 C154.5 250 153 246 152 242 C149 231 146 221 143 210.7 C140 200 136 188 130.4 179.5 C126 174 120 170 114.75 167 C108 163 102 160 97 158 Z"/></clipPath>
 </defs>
 <rect width="176" height="313" fill="#fdfdfe"/>
 <rect width="176" height="72" fill="#2d5191"/>
 <path d="M0 57.5 C30 51 58 44 84 32.4 C108 20 130 8.5 153 6.7 C164 6 171 7 176 8.8 L176 46 L0 70 Z" fill="#2a999c"/>
 <path d="M84 37.9 C104 30 124 15 148 10.8 C162 9 171 10 176 11.2 L176 44 C140 41 110 38.5 84 37.9 Z" fill="#3ba9ae"/>
 <path d="M0 67.8 C30 62 58 50 84 37.9 C110 38.5 150 42 176 44 L176 313 L0 313 Z" fill="#fdfdfe"/>
 <!-- logo -->
 <circle cx="17.7" cy="18.5" r="3" fill="none" stroke="#fff" stroke-width="1"/>
 <circle cx="17.7" cy="18.5" r="1.2" fill="#fff"/>
 <g font-family="Liberation Sans" font-weight="bold" fill="#eef1f7" stroke="#eef1f7" stroke-width="0.2">
  <text x="22.7" y="18" font-size="3.4" textLength="17" lengthAdjust="spacingAndGlyphs">CORPORATE</text>
  <text x="22.7" y="21.4" font-size="3.4" textLength="7.5" lengthAdjust="spacingAndGlyphs">LOGO</text>
  <text x="14.5" y="36.4" font-size="3.3" textLength="35" lengthAdjust="spacingAndGlyphs">www.corporatesf.com</text>
 </g>
 <text x="14.5" y="30.3" font-family="Liberation Sans" font-size="3.3" fill="#8ea6cf" textLength="6.5" lengthAdjust="spacingAndGlyphs">2020</text>
 <!-- gray grid circle -->
 <filter id="blr" x="-0.3" y="-0.3" width="1.6" height="1.6"><feGaussianBlur stdDeviation="0.5"/></filter>
 <circle cx="109.5" cy="62" r="13" fill="url(#grid)" opacity="0.8" filter="url(#blr)"/>
 <!-- headline -->
 <g font-family="Liberation Sans" font-weight="bold" font-size="9.3" fill="#1a386c" stroke="#1a386c" stroke-width="0.35" text-anchor="end" transform="translate(161.2 0) scale(1.03 1) translate(-161.2 0)">
  <text x="161.2" y="62.9">MANAGE</text>
  <text x="161.2" y="72.4">FRAUD</text>
  <text x="161.2" y="81.9">AND</text>
  <text x="161.2" y="91.4">MITIGATE</text>
  <text x="161.2" y="100.9">RISK</text>
 </g>
 <g font-family="Liberation Sans" font-weight="bold" font-size="3.6" fill="#2a4a80" text-anchor="end">
  <text x="160.6" y="112.3">Upto for</text>
  <text x="160.6" y="116.5">Registration</text>
 </g>
 <rect x="137.5" y="123.6" width="24" height="6.2" rx="3.1" fill="#fff" stroke="#8d9bb4" stroke-width="0.7"/>
 <text x="149.5" y="127.6" font-family="Liberation Sans" font-size="2.6" fill="#2a4a80" text-anchor="middle">Submit Here</text>
 <!-- man: suit body -->
 <path d="M55 160.5 C48 165 42 169 36.6 171.7 C28 175 22 178 18 183 C13 190 10.5 200 9.5 208 C7.5 220 6 232 5.4 242 C4 252 2.5 262 2.25 270 C2.5 276 4.5 280 7 282.6 C13 288 20 292 27 295 C32 297 38 298 43 298.5 L36 313 L131 313 L129.8 300 L125 276 C132 274 142 272 149 270 C153 266 155.5 262 155.4 257.6 C154.5 250 153 246 152 242 C149 231 146 221 143 210.7 C140 200 136 188 130.4 179.5 C126 174 120 170 114.75 167 C108 163 102 160 97 158 Z" fill="url(#plaid)"/>
 <g clip-path="url(#suitclip)"><path d="M3 266 C6 262 14 260 22 262 L24 270 C18 272 10 276 4 280 Z" fill="#8d97a6" opacity="0.55"/>
 <path d="M125 250 C135 246 148 246 155 250 L155 256 C146 254 134 256 126 258 Z" fill="#8d97a6" opacity="0.5"/>
 <path d="M17.2 178.9 C12 190 8 210 6 232 C4 250 2 265 2.4 278 L22 262 C21 240 23 215 28 195 Z" fill="#97a1b0" opacity="0.35"/></g>
 <!-- shirt -->
 <path d="M60 160 L70 200 L76 218 L100 218 L101 178 L96 158 Z" fill="#faf3f5"/>
 <path d="M57 160 L64 176 L70 163 L62 156 Z" fill="#f4f0f2"/>
 <path d="M70 163 L75 170 L80 165 Z" fill="#e9bcc8"/>
 <path d="M93 157 L99 176 L104 163 L97 155 Z" fill="#f4f0f2"/>
 <path d="M96 161 L99 168 L101 162 Z" fill="#cf8ea0"/>
 <!-- lapels -->
 <path d="M55.5 160.8 L60 172 L56 178 L72 214 L75.5 214 L64 180 L66 172 L60 160 Z" fill="#94a0b0" opacity="0.7"/>
 <path d="M99 160 L104 172 L108 178 L103 214 L100.5 214 L103 180 L101 171 Z" fill="#94a0b0" opacity="0.7"/>
 <!-- neck -->
 <path d="M63 146 L63 160 C68 168 84 170 90 162 L90 146 Z" fill="#dba78e"/>
 <path d="M63 150 C70 158 82 158 90 150 L90 154 C82 162 70 162 63 154 Z" fill="#c99580" opacity="0.6"/>
 <!-- ears -->
 <ellipse cx="52" cy="124" rx="2.8" ry="5.5" fill="#dca48b"/>
 <ellipse cx="95.2" cy="122" rx="2.4" ry="5" fill="#dca48b"/>
 <!-- face -->
 <path d="M54 106 C54 99 61 95 74 95 C87 95 93.5 99 94 107 L94 128 C93.5 142 86 155 75.3 158.5 C63 155 55 142 54 128 Z" fill="url(#face)"/>
 <!-- beard -->
 <path d="M55.5 128 C56 144 65 157 75.3 159 C86 157 93 144 93.8 128 C92 136 89 140 86 140 C82 137 79 136 75 136.5 C71 136 68 137 64 140 C60 140 57 135 55.5 128 Z" fill="#94725f" opacity="0.62"/>
 <path d="M66.5 140 C69 147 81 147 84.5 140 C80 142.5 70 142.5 66.5 140 Z" fill="#fbfbfb"/>
 <!-- eyes/brows -->
 <path d="M58.5 119.5 C61.5 117.8 65.5 117.8 68.5 119.2" stroke="#7a5a48" stroke-width="1.1" fill="none"/>
 <path d="M80.5 119.2 C83.5 117.8 87.5 117.8 90 119.5" stroke="#7a5a48" stroke-width="1.1" fill="none"/>
 <ellipse cx="63.5" cy="123.5" rx="2.3" ry="0.9" fill="#5e4438"/>
 <ellipse cx="85" cy="123.5" rx="2.3" ry="0.9" fill="#5e4438"/>
 <path d="M73 128 C74 132 72 135 73 137 C75 138.5 78 138 78.5 136.5" stroke="#c8907a" stroke-width="0.8" fill="none"/>
 <!-- hair -->
 <path d="M48.5 106 C47 96 51 88 58 85 C63 82 70 81.5 76 82.5 C84 82 92 86 95.5 94 C97.5 100 96.5 108 94.6 118 C93.5 112 92.5 108 90 105.5 C82 103 66 103 58 105.5 C55 109 53.5 114 51 121 C49 116 48.5 111 48.5 106 Z" fill="#6e4e3b"/>
 <path d="M52 95 C57 88 66 85 76 85.5 C86 86 92 90 94.5 97 C89 93 81 90.5 72 91 C63 91.5 57 94 52 99 Z" fill="#8e6d57" opacity="0.85"/>
 <g stroke="#5a3f30" stroke-width="0.6" fill="none" opacity="0.7">
  <path d="M58 90 C62 87 68 86 72 87"/><path d="M76 86 C82 87 88 89 92 94"/><path d="M55 97 C60 94 66 93 70 93"/><path d="M80 93 C85 94 89 97 92 101"/>
 </g>
 <!-- laptop -->
 <rect x="23.6" y="214.6" width="100.9" height="64.5" rx="2.2" fill="url(#lap)" stroke="#d6d7da" stroke-width="0.7"/>
 <!-- hands -->
 <path d="M49 281 C55 278 70 277 84 277.5 C92 277.5 99 279 100 282 C96 284 89 284.5 83 284.5 C77 290 67 293.5 57 293.5 C51 291.5 48 287 49 281 Z" fill="#d9a58f"/>
 <path d="M41 279.5 L49 279 L51 295 L43 297 Z" fill="#ecd6dc"/>
 <path d="M84 285 L96 284 L97 300 L83 300 Z" fill="#f0dfe3"/>
 <rect x="82.5" y="300" width="14" height="13" fill="#403830"/>
 <!-- dots -->
 <g fill="#2f5c9e"><circle cx="116.5" cy="278.0" r="0.85"/><circle cx="116.5" cy="282.2" r="0.85"/><circle cx="116.5" cy="286.4" r="0.85"/><circle cx="116.5" cy="290.6" r="0.85"/><circle cx="116.5" cy="294.8" r="0.85"/><circle cx="116.5" cy="299.0" r="0.85"/><circle cx="116.5" cy="303.2" r="0.85"/><circle cx="120.5" cy="278.0" r="0.85"/><circle cx="120.5" cy="282.2" r="0.85"/><circle cx="120.5" cy="286.4" r="0.85"/><circle cx="120.5" cy="290.6" r="0.85"/><circle cx="120.5" cy="294.8" r="0.85"/><circle cx="120.5" cy="299.0" r="0.85"/><circle cx="120.5" cy="303.2" r="0.85"/><circle cx="124.5" cy="278.0" r="0.85"/><circle cx="124.5" cy="282.2" r="0.85"/><circle cx="124.5" cy="286.4" r="0.85"/><circle cx="124.5" cy="290.6" r="0.85"/><circle cx="124.5" cy="294.8" r="0.85"/><circle cx="124.5" cy="299.0" r="0.85"/><circle cx="124.5" cy="303.2" r="0.85"/><circle cx="128.5" cy="278.0" r="0.85"/><circle cx="128.5" cy="282.2" r="0.85"/><circle cx="128.5" cy="286.4" r="0.85"/><circle cx="128.5" cy="290.6" r="0.85"/><circle cx="128.5" cy="294.8" r="0.85"/><circle cx="128.5" cy="299.0" r="0.85"/><circle cx="128.5" cy="303.2" r="0.85"/><circle cx="132.5" cy="278.0" r="0.85"/><circle cx="132.5" cy="282.2" r="0.85"/><circle cx="132.5" cy="286.4" r="0.85"/><circle cx="132.5" cy="290.6" r="0.85"/><circle cx="132.5" cy="294.8" r="0.85"/><circle cx="132.5" cy="299.0" r="0.85"/><circle cx="132.5" cy="303.2" r="0.85"/><circle cx="136.5" cy="278.0" r="0.85"/><circle cx="136.5" cy="282.2" r="0.85"/><circle cx="136.5" cy="286.4" r="0.85"/><circle cx="136.5" cy="290.6" r="0.85"/><circle cx="136.5" cy="294.8" r="0.85"/><circle cx="136.5" cy="299.0" r="0.85"/><circle cx="136.5" cy="303.2" r="0.85"/><circle cx="140.5" cy="278.0" r="0.85"/><circle cx="140.5" cy="282.2" r="0.85"/><circle cx="140.5" cy="286.4" r="0.85"/><circle cx="140.5" cy="290.6" r="0.85"/><circle cx="140.5" cy="294.8" r="0.85"/><circle cx="140.5" cy="299.0" r="0.85"/><circle cx="140.5" cy="303.2" r="0.85"/><circle cx="144.5" cy="278.0" r="0.85"/><circle cx="144.5" cy="282.2" r="0.85"/><circle cx="144.5" cy="286.4" r="0.85"/><circle cx="144.5" cy="290.6" r="0.85"/><circle cx="144.5" cy="294.8" r="0.85"/><circle cx="144.5" cy="299.0" r="0.85"/><circle cx="144.5" cy="303.2" r="0.85"/><circle cx="148.5" cy="278.0" r="0.85"/><circle cx="148.5" cy="282.2" r="0.85"/><circle cx="148.5" cy="286.4" r="0.85"/><circle cx="148.5" cy="290.6" r="0.85"/><circle cx="148.5" cy="294.8" r="0.85"/><circle cx="148.5" cy="299.0" r="0.85"/><circle cx="148.5" cy="303.2" r="0.85"/><circle cx="152.5" cy="278.0" r="0.85"/><circle cx="152.5" cy="282.2" r="0.85"/><circle cx="152.5" cy="286.4" r="0.85"/><circle cx="152.5" cy="290.6" r="0.85"/><circle cx="152.5" cy="294.8" r="0.85"/><circle cx="152.5" cy="299.0" r="0.85"/><circle cx="152.5" cy="303.2" r="0.85"/><circle cx="156.5" cy="278.0" r="0.85"/><circle cx="156.5" cy="282.2" r="0.85"/><circle cx="156.5" cy="286.4" r="0.85"/><circle cx="156.5" cy="290.6" r="0.85"/><circle cx="156.5" cy="294.8" r="0.85"/><circle cx="156.5" cy="299.0" r="0.85"/><circle cx="156.5" cy="303.2" r="0.85"/><circle cx="160.5" cy="278.0" r="0.85"/><circle cx="160.5" cy="282.2" r="0.85"/><circle cx="160.5" cy="286.4" r="0.85"/><circle cx="160.5" cy="290.6" r="0.85"/><circle cx="160.5" cy="294.8" r="0.85"/><circle cx="160.5" cy="299.0" r="0.85"/><circle cx="160.5" cy="303.2" r="0.85"/><circle cx="164.5" cy="278.0" r="0.85"/><circle cx="164.5" cy="282.2" r="0.85"/><circle cx="164.5" cy="286.4" r="0.85"/><circle cx="164.5" cy="290.6" r="0.85"/><circle cx="164.5" cy="294.8" r="0.85"/><circle cx="164.5" cy="299.0" r="0.85"/><circle cx="164.5" cy="303.2" r="0.85"/><circle cx="168.5" cy="278.0" r="0.85"/><circle cx="168.5" cy="282.2" r="0.85"/><circle cx="168.5" cy="286.4" r="0.85"/><circle cx="168.5" cy="290.6" r="0.85"/><circle cx="168.5" cy="294.8" r="0.85"/><circle cx="168.5" cy="299.0" r="0.85"/><circle cx="168.5" cy="303.2" r="0.85"/></g>
</svg>
</body></html>
